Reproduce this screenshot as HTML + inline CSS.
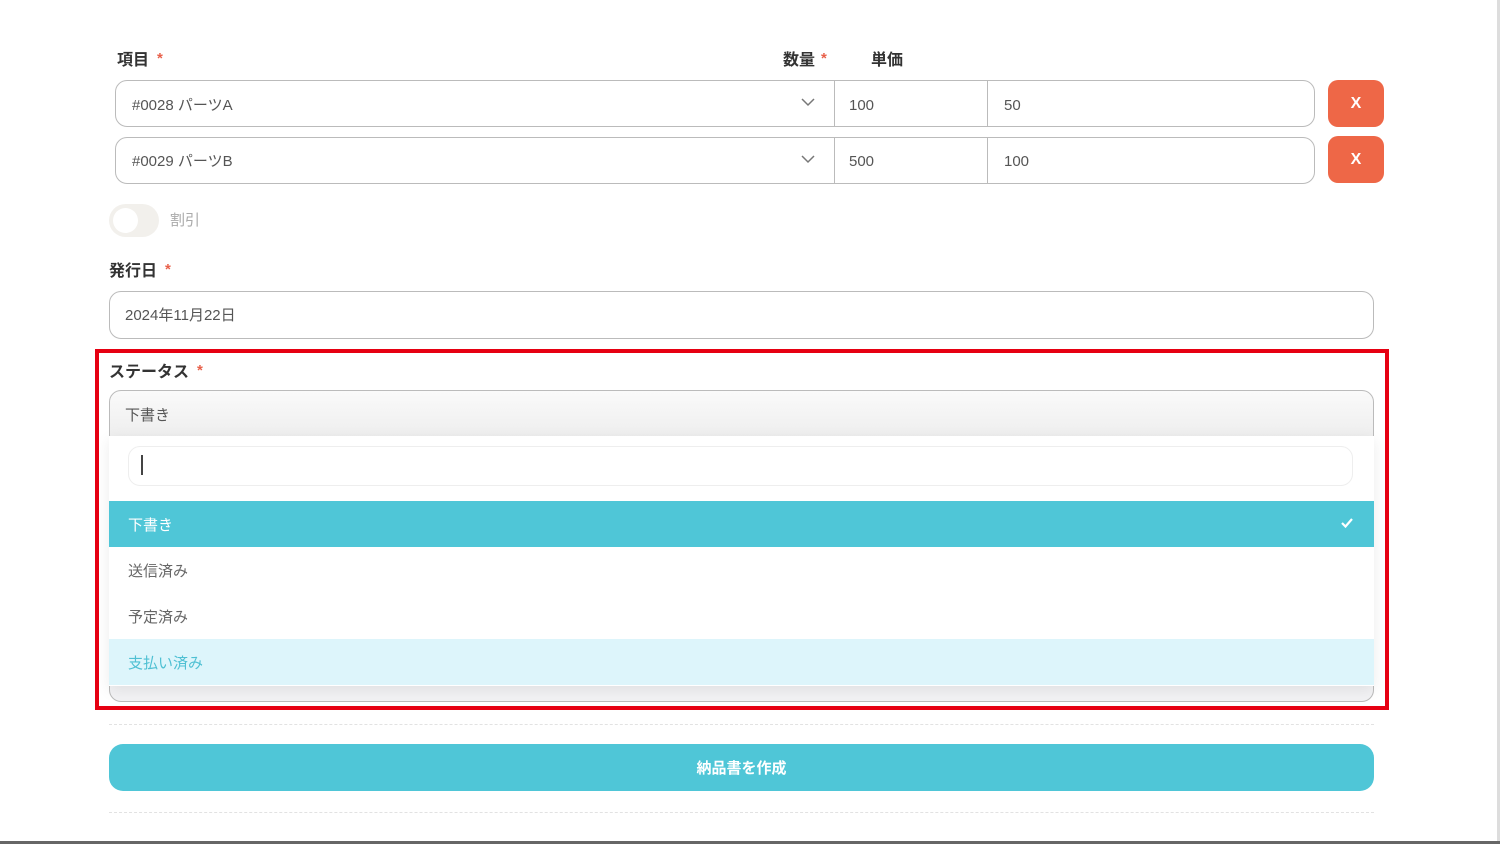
<!DOCTYPE html>
<html><head><meta charset="utf-8"><style>
*{box-sizing:border-box;margin:0;padding:0}
body{width:1500px;height:844px;background:#fff;position:relative;overflow:hidden;font-family:"Liberation Sans","Noto Sans CJK JP",sans-serif;color:#555}
.a{position:absolute}
.lbl{font-size:16px;font-weight:bold;color:#333;line-height:25px}
.req{color:#e8604a;font-size:15px;margin-left:8px;vertical-align:baseline;position:relative;top:-2px}
.grp{border:1.5px solid #bbb;border-radius:12px;background:#fff}
.t{font-size:15px;color:#555;line-height:24px}
.x{background:#ee6747;border-radius:10px;color:#fff;font-size:16px;font-weight:bold;text-align:center;line-height:47px}
.dot{border-top:1px dashed #e2e2e2;height:0}
</style></head><body>
<div class="a lbl" style="left:117px;top:48px">項目<span class="req">*</span></div>
<div class="a lbl" style="left:783px;top:48px">数量<span class="req" style="margin-left:6px">*</span></div>
<div class="a lbl" style="left:871px;top:48px">単価</div>

<div class="a grp" style="left:115px;top:80px;width:1200px;height:47px"></div>
<div class="a" style="left:834px;top:81px;width:1px;height:45px;background:#bbb"></div>
<div class="a" style="left:987px;top:81px;width:1px;height:45px;background:#bbb"></div>
<div class="a t" style="left:132px;top:94px">#0028 パーツA</div>
<div class="a t" style="left:849px;top:94px">100</div>
<div class="a t" style="left:1004px;top:94px">50</div>
<svg class="a" style="left:801px;top:97px" width="14" height="10"><path d="M1 2 L7 8 L13 2" fill="none" stroke="#777" stroke-width="1.5"/></svg>
<div class="a x" style="left:1328px;top:80px;width:56px;height:47px">X</div>

<div class="a grp" style="left:115px;top:137px;width:1200px;height:47px"></div>
<div class="a" style="left:834px;top:138px;width:1px;height:45px;background:#bbb"></div>
<div class="a" style="left:987px;top:138px;width:1px;height:45px;background:#bbb"></div>
<div class="a t" style="left:132px;top:150px">#0029 パーツB</div>
<div class="a t" style="left:849px;top:150px">500</div>
<div class="a t" style="left:1004px;top:150px">100</div>
<svg class="a" style="left:801px;top:154px" width="14" height="10"><path d="M1 2 L7 8 L13 2" fill="none" stroke="#777" stroke-width="1.5"/></svg>
<div class="a x" style="left:1328px;top:136px;width:56px;height:47px">X</div>

<div class="a" style="left:109px;top:204px;width:50px;height:33px;border-radius:17px;background:#f2f0ec"></div>
<div class="a" style="left:113px;top:208px;width:25px;height:25px;border-radius:50%;background:#fff"></div>
<div class="a t" style="left:170px;top:209px;color:#aaa">割引</div>

<div class="a lbl" style="left:109px;top:259px">発行日<span class="req">*</span></div>
<div class="a grp" style="left:109px;top:291px;width:1265px;height:48px"></div>
<div class="a t" style="left:125px;top:304px">2024年11月22日</div>

<div class="a lbl" style="left:109px;top:360px">ステータス<span class="req">*</span></div>
<div class="a grp" style="left:109px;top:390px;width:1265px;height:312px;background:linear-gradient(#fafafa,#eee 46px,#f2f2f4 46px)"></div>
<div class="a t" style="left:125px;top:404px">下書き</div>
<div class="a" style="left:109px;top:436px;width:1265px;height:250px;background:#fff;box-shadow:0 4px 14px rgba(0,0,0,.08)"></div>
<div class="a" style="left:128px;top:446px;width:1225px;height:40px;border:1px solid #eee;border-radius:12px"></div>
<div class="a" style="left:141px;top:455px;width:1.5px;height:20px;background:#444"></div>
<div class="a" style="left:109px;top:501px;width:1265px;height:46px;background:#4fc6d7"></div>
<div class="a t" style="left:128px;top:514px;color:#fff">下書き</div>
<svg class="a" style="left:1340px;top:517px" width="14" height="12"><path d="M2 6 L5.5 9.5 L12 2" fill="none" stroke="#fff" stroke-width="2.2"/></svg>
<div class="a t" style="left:128px;top:560px;color:#666">送信済み</div>
<div class="a t" style="left:128px;top:606px;color:#666">予定済み</div>
<div class="a" style="left:109px;top:639px;width:1265px;height:46px;background:#ddf5fb"></div>
<div class="a t" style="left:128px;top:652px;color:#4fc0d3">支払い済み</div>

<div class="a" style="left:95px;top:349px;width:1294px;height:361px;border:4px solid #e60012"></div>

<div class="a dot" style="left:109px;top:724px;width:1265px"></div>
<div class="a" style="left:109px;top:744px;width:1265px;height:47px;background:#4fc6d7;border-radius:14px;color:#fff;font-size:15px;font-weight:bold;text-align:center;line-height:49px">納品書を作成</div>
<div class="a dot" style="left:109px;top:812px;width:1265px"></div>
<div class="a" style="left:1497px;top:0;width:3px;height:844px;background:#ddd"></div>
<div class="a" style="left:0;top:841px;width:1500px;height:3px;background:#666"></div>
</body></html>
